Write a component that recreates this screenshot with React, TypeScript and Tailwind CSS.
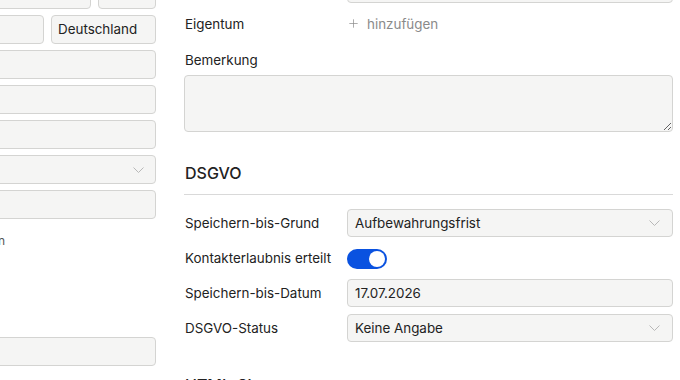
import { Plus } from 'lucide-react';

const box = 'h-[29px] rounded-[4px] border border-[#d4d4d2] bg-[#f5f5f4]';
const input =
  'flex h-[28px] w-full items-center rounded-[4px] border border-[#d4d4d2] bg-[#f5f5f4] px-[7px] text-[13.4px] text-[#222]';

const Chevron = ({ className = 'mr-[5px]' }: { className?: string }) => (
  <svg width="11" height="6" viewBox="0 0 11 6" fill="none" className={`ml-auto ${className}`}>
    <path d="M0.5 0.5L5.5 5.5L10.5 0.5" stroke="#b8b8b8" strokeWidth="1" />
  </svg>
);

const Row = ({ label, children }: { label: string; children: React.ReactNode }) => (
  <div className="flex h-[28px] items-center">
    <div className="w-[163px] pl-px text-[13.4px] text-[#222]">{label}</div>
    <div className="flex flex-1 items-center">{children}</div>
  </div>
);

export default function App() {
  return (
    <div
      className="h-[380px] w-[680px] overflow-hidden bg-white"
      style={{ fontFamily: 'Inter, "Noto Sans", sans-serif' }}
    >
      <div className="flex items-start gap-[28px]">
        {/* left column, cut off by the viewport */}
        <div className="-ml-[144px] -mt-[20px] flex w-[300px] shrink-0 flex-col gap-[6px]">
          <div className="flex gap-[7px]">
            <div className={`${box} flex-1`} />
            <div className={`${box} w-[58px]`} />
          </div>
          <div className="flex gap-[7px]">
            <div className={`${box} flex-1`} />
            <div className={`${box} flex w-[105px] items-center px-[6px] text-[13.4px] text-[#222]`}>
              Deutschland
            </div>
          </div>
          <div className={box} />
          <div className={box} />
          <div className={box} />
          <div className={`${box} flex items-center`}>
            <Chevron className="mr-[11px]" />
          </div>
          <div className={box} />
          <div className="mt-[6px] w-[149px] text-right text-[12px] leading-[20px] text-[#555]">
            Als Standard verwenden
          </div>
          <div className={`${box} mt-[80px]`} />
        </div>

        {/* right column */}
        <div className="-mt-[25px] flex w-[489px] shrink-0 flex-col">
          <div className="flex h-[28px]">
            <div className="w-[163px]" />
            <div className="flex-1 rounded-[4px] border border-[#d4d4d2] bg-[#f5f5f4]" />
          </div>
          <div className="mt-[7px]">
            <Row label="Eigentum">
              <div className="flex items-center gap-[7px] text-[13.4px] text-[#8a8a8a]">
                <Plus size={13} strokeWidth={1.3} />
                <span>hinzufügen</span>
              </div>
            </Row>
          </div>
          <div className="mt-[12px] pl-px text-[13.4px] leading-[20px] text-[#222]">Bemerkung</div>
          <textarea className="mt-[5px] h-[57px] w-full rounded-[4px] border border-[#d4d4d2] bg-[#f5f5f4] px-[7px] py-[5px] text-[14px] outline-none" />

          <div className="mt-[29px] border-b border-[#d9d9d9] pb-[9px]">
            <h2 className="pl-px text-[16px] leading-[24px] font-medium text-[#222]">DSGVO</h2>
          </div>

          <div className="mt-[14px] flex flex-col gap-[7px]">
            <Row label="Speichern-bis-Grund">
              <div className={input}>
                Aufbewahrungsfrist
                <Chevron />
              </div>
            </Row>
            <Row label="Kontakterlaubnis erteilt">
              <div className="mt-px flex h-[20px] w-[40px] items-center justify-end rounded-full bg-[#0a52e0] px-[2px]">
                <div className="h-[16px] w-[16px] rounded-full bg-white" />
              </div>
            </Row>
            <Row label="Speichern-bis-Datum">
              <div className={input}>17.07.2026</div>
            </Row>
            <Row label="DSGVO-Status">
              <div className={input}>
                Keine Angabe
                <Chevron />
              </div>
            </Row>
          </div>

          <div className="mt-[31px]">
            <h2 className="pl-px text-[16px] leading-[24px] font-medium text-[#222]">HTML-Signatur</h2>
          </div>
        </div>
      </div>
    </div>
  );
}
